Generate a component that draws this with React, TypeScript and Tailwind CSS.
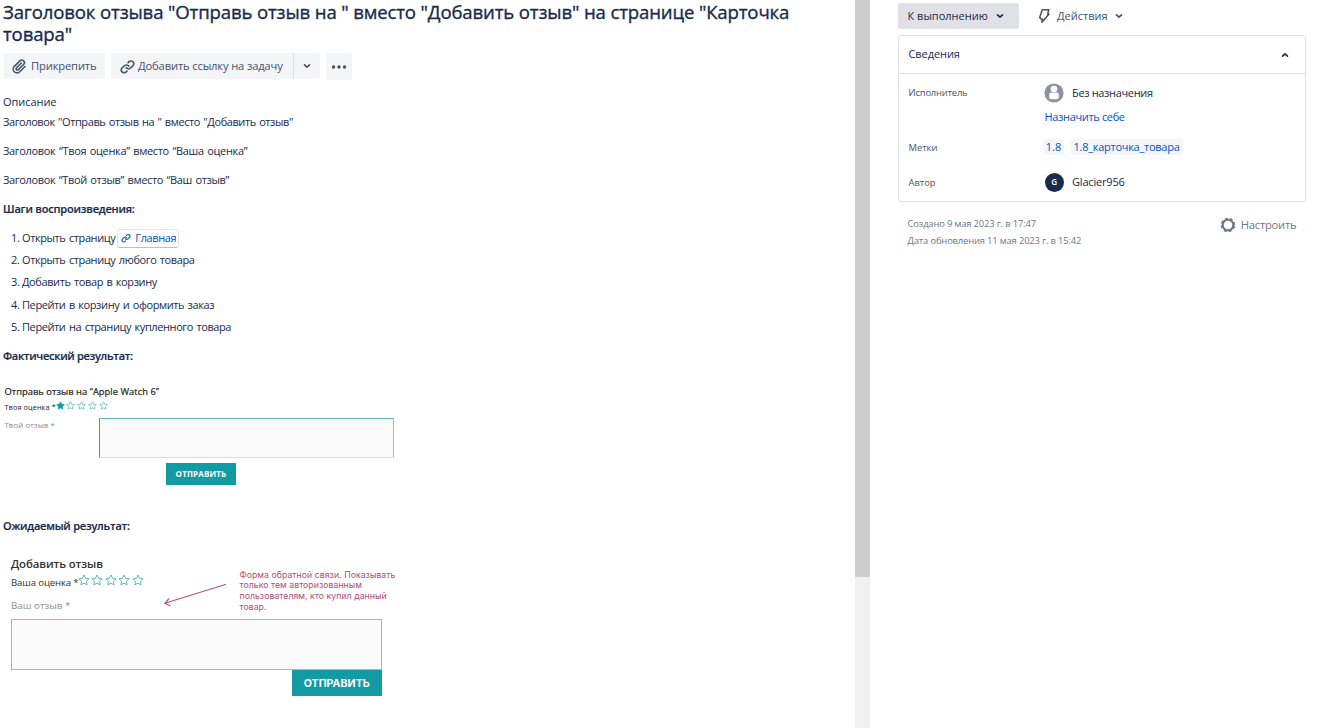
import type { ReactNode } from 'react';

const STAR = 'M12 2l3.1 6.6 7.1.9-5.2 5 1.3 7.2-6.3-3.5-6.3 3.5L7 14.500 1.800 9.500l7.100-.9z';

function Star({ filled = false, className }: { filled?: boolean; className: string }) {
  return (
    <svg viewBox="0 0 24 24" className={className} fill={filled ? '#129ba3' : 'none'} stroke={filled ? '#129ba3' : '#5fb5bb'} strokeWidth="2" strokeLinejoin="miter">
      <path d={STAR} />
    </svg>
  );
}

function LinkIcon({ className }: { className: string }) {
  return (
    <svg viewBox="0 0 24 24" className={className} fill="currentColor">
      <path d="M12.856 5.457l-.937.92a1.002 1.002 0 0 0 0 1.437 1.047 1.047 0 0 0 1.463 0l.984-.966c.967-.95 2.542-1.135 3.602-.288a2.54 2.54 0 0 1 .203 3.81l-2.903 2.852a2.646 2.646 0 0 1-3.696 0l-1.11-1.09L9 13.57l1.108 1.089c1.822 1.788 4.802 1.788 6.622 0l2.905-2.852a4.558 4.558 0 0 0-.357-6.82c-1.893-1.517-4.695-1.226-6.422.47" />
      <path d="M11.144 19.543l.937-.92a1.002 1.002 0 0 0 0-1.437 1.047 1.047 0 0 0-1.462 0l-.985.966c-.967.95-2.542 1.135-3.602.288a2.54 2.54 0 0 1-.203-3.81l2.903-2.852a2.646 2.646 0 0 1 3.696 0l1.11 1.09L15 11.43l-1.108-1.089c-1.822-1.788-4.802-1.788-6.622 0l-2.905 2.852a4.558 4.558 0 0 0 .357 6.82c1.893 1.517 4.695 1.226 6.422-.47" />
    </svg>
  );
}

function ClipIcon({ className }: { className: string }) {
  return (
    <svg viewBox="0 0 24 24" className={className} fill="currentColor">
      <path d="M11.643 17.965c-1.53 1.495-4.016 1.496-5.542.004a3.773 3.773 0 0 1 .002-5.412l7.147-6.985a2.316 2.316 0 0 1 3.233-.003c.893.873.895 2.282.004 3.153l-6.703 6.55a.653.653 0 0 1-.914-.008.62.62 0 0 1 0-.902l6.229-6.087a.941.941 0 0 0 0-1.353.995.995 0 0 0-1.384 0l-6.23 6.087a2.502 2.502 0 0 0 0 3.607 2.643 2.643 0 0 0 3.683.009l6.703-6.55a4.074 4.074 0 0 0-.003-5.859 4.306 4.306 0 0 0-6.002.003l-7.148 6.985a5.655 5.655 0 0 0-.001 8.118c2.29 2.24 6.015 2.238 8.31-.005l6.686-6.533a.941.941 0 0 0 0-1.353.995.995 0 0 0-1.384 0l-6.686 6.534z" />
    </svg>
  );
}

function Chevron({ up = false, className = '' }: { up?: boolean; className?: string }) {
  return (
    <svg viewBox="0 0 8 6" className={'h-[6px] w-[8px] shrink-0 ' + className} fill="none" stroke="currentColor" strokeWidth="1.6" strokeLinecap="round" strokeLinejoin="round">
      <path d={up ? 'M1.500 4.200L4 1.800l2.500 2.400' : 'M1.500 1.800L4 4.200l2.500-2.400'} />
    </svg>
  );
}

function Row({ className = '', children }: { className?: string; children: ReactNode }) {
  return <div className={'flex items-center ' + className}>{children}</div>;
}

function Main() {
  return (
    <main className="flex w-[855px] shrink-0 flex-col pl-[3px]">
      <h1 className="h-[52px] pt-[1px] text-[18.6px] leading-[22.4px] tracking-[-0.150px] whitespace-nowrap [-webkit-text-stroke:0.35px]">
        Заголовок отзыва "Отправь отзыв на " вместо "Добавить отзыв" на странице "Карточка
        <br />
        товара"
      </h1>
      <div className="mt-[1px] ml-[1px] flex h-[27px] text-[11.2px] tracking-[-0.15px] text-[#42526e]">
        <button className="mr-[6px] flex h-[26px] w-[101px] items-center rounded-[2px] bg-[#f4f5f7] pl-[6px]">
          <ClipIcon className="mr-[2px] size-[19px]" />
          <span>Прикрепить</span>
        </button>
        <button className="flex h-[26px] w-[182px] items-center rounded-l-[2px] bg-[#f4f5f7] pl-[7px]">
          <LinkIcon className="mr-[1px] size-[19px] shrink-0" />
          <span className="whitespace-nowrap">Добавить ссылку на задачу</span>
        </button>
        <button className="mr-[6px] flex h-[26px] w-[27px] items-center justify-center rounded-r-[2px] border-l border-[#dcdfe4] bg-[#f4f5f7]">
          <Chevron />
        </button>
        <button className="flex h-[27px] w-[26px] items-center justify-center rounded-[2px] bg-[#f4f5f7]">
          <svg viewBox="0 0 16 4" className="-ml-[1px] h-[4px] w-[16px]" fill="currentColor">
            <circle cx="2.500" cy="2" r="1.700" />
            <circle cx="8" cy="2" r="1.700" />
            <circle cx="13.500" cy="2" r="1.700" />
          </svg>
        </button>
      </div>
      <div className="mt-[12px] flex flex-col text-[11px] leading-[20px] whitespace-nowrap">
        <Row className="h-[20px] tracking-[-0.05px]">Описание</Row>
        <Row className="h-[20px] tracking-[-0.41px] [word-spacing:0.9px]">Заголовок "Отправь отзыв на " вместо "Добавить отзыв"</Row>
        <Row className="mt-[9px] h-[20px] tracking-[-0.33px] [word-spacing:1px]">Заголовок “Твоя оценка” вместо “Ваша оценка”</Row>
        <Row className="mt-[9px] h-[20px] tracking-[-0.35px] [word-spacing:1px]">Заголовок “Твой отзыв” вместо “Ваш отзыв”</Row>
        <Row className="mt-[9px] h-[20px] font-semibold tracking-[-0.2px] [-webkit-text-stroke:0.2px]">Шаги воспроизведения:</Row>
      </div>
      <ol className="mt-[8px] flex flex-col pl-[8px] text-[11px] leading-[22px] tracking-[-0.4px] whitespace-nowrap [word-spacing:1px]">
        <li className="flex h-[22px] items-center">
          <span className="w-[11px]">1.</span>
          <span>Открыть страницу</span>
          <a className="ml-[2px] flex h-[19px] w-[62px] items-center rounded-[3px] border border-[#e1e4ea] border-b-[#b9bfca] pl-[2px] text-[#0052cc]">
            <LinkIcon className="mr-[3px] size-[12px]" />
            <span>Главная</span>
          </a>
        </li>
        <li className="flex h-[22px] items-center">
          <span className="w-[11px]">2.</span>
          <span>Открыть страницу любого товара</span>
        </li>
        <li className="flex h-[22px] items-center">
          <span className="w-[11px]">3.</span>
          <span>Добавить товар в корзину</span>
        </li>
        <li className="flex h-[23px] items-center">
          <span className="w-[11px]">4.</span>
          <span>Перейти в корзину и оформить заказ</span>
        </li>
        <li className="flex h-[22px] items-center">
          <span className="w-[11px]">5.</span>
          <span>Перейти на страницу купленного товара</span>
        </li>
      </ol>
      <Row className="mt-[8px] h-[20px] text-[11px] font-semibold tracking-[-0.3px] [-webkit-text-stroke:0.2px]">Фактический результат:</Row>

      <section className="flex h-[150px] flex-col pt-[20px] pl-[1.500px] text-[#222]">
        <Row className="h-[12px] text-[9.300px] tracking-[0.050px] [-webkit-text-stroke:0.2px]">Отправь отзыв на “Apple Watch 6”</Row>
        <div className="flex h-[16px]">
          <Row className="h-[18px] w-[51px] text-[7.300px] tracking-[0.100px] whitespace-nowrap">Твоя оценка *</Row>
          <div className="flex h-[14px] items-center gap-[1.900px]">
            <Star filled className="size-[9px]" />
            <Star className="size-[9px]" />
            <Star className="size-[9px]" />
            <Star className="size-[9px]" />
            <Star className="size-[9px]" />
          </div>
        </div>
        <div className="mt-[4px] flex">
          <Row className="h-[15px] w-[94.500px] text-[7.800px] tracking-[0.080px] text-[#8c8c8c]">Твой отзыв *</Row>
          <div className="h-[40px] w-[295px] border border-t-[#5fbcc2] border-r-[#86cbd0] border-b-[#cbe5e6] border-l-[#2ba3aa] bg-[#fafafa]" />
        </div>
        <button className="mt-[5px] ml-[161.500px] flex h-[22px] w-[70px] items-center justify-center bg-[#129ba3] text-[8px] font-bold tracking-[0.180px] text-white">ОТПРАВИТЬ</button>
      </section>

      <Row className="h-[20px] text-[11px] font-semibold tracking-[-0.220px] [-webkit-text-stroke:0.2px]">Ожидаемый результат:</Row>

      <section className="flex flex-col pt-[20px] pl-[8px] text-[#333]">
        <div className="flex h-[63px]">
          <div className="w-[153px]">
            <Row className="h-[16px] text-[11.400px] font-semibold tracking-[-0.130px]">Добавить отзыв</Row>
            <div className="flex h-[22px]">
              <Row className="h-[23px] w-[66.500px] text-[9.600px] tracking-[-0.130px] whitespace-nowrap">Ваша оценка *</Row>
              <div className="flex h-[16px] items-center gap-[1.500px]">
                <Star className="size-[12px]" />
                <Star className="size-[12px]" />
                <Star className="size-[12px]" />
                <Star className="size-[12px]" />
                <Star className="size-[12px]" />
              </div>
            </div>
            <Row className="mt-[1px] h-[23px] text-[9.800px] text-[#8f8f8f]">Ваш отзыв *</Row>
          </div>
          <svg className="mt-[26px] h-[26px] w-[63px]" viewBox="0 0 63 26" fill="none" stroke="#b05578" strokeWidth="1.2" strokeLinecap="round" strokeLinejoin="round">
            <path d="M61.500 2.500L0.800 21.300M4.700 17L0.800 21.300l5.200 2.500" />
          </svg>
          <p className="mt-[13.500px] ml-[12.500px] font-['Inter','Liberation_Sans',sans-serif] text-[8.700px] leading-[10.700px] tracking-[0.050px] whitespace-nowrap text-[#b34d75]">
            Форма обратной связи. Показывать
            <br />
            только тем авторизованным
            <br />
            пользователям, кто купил данный
            <br />
            товар.
          </p>
        </div>
        <div className="h-[51px] w-[371px] border border-solid border-[#7cc9ce] bg-[#fafafa]" />
        <button className="ml-[280.500px] flex h-[26px] w-[90.500px] items-center justify-center bg-[#129ba3] pt-[1px] font-['Inter','Liberation_Sans',sans-serif] text-[10.600px] font-bold tracking-[0.020px] text-white">ОТПРАВИТЬ</button>
      </section>
    </main>
  );
}

function Aside() {
  return (
    <aside className="flex w-[450px] flex-col pt-[3px] pl-[28px]">
      <div className="flex h-[26px] text-[11px]">
        <button className="flex w-[121px] items-center rounded-[2px] bg-[#dfe1e6] pl-[9.500px]">
          <span className="w-[88px] text-left whitespace-nowrap">К выполнению</span>
          <Chevron />
        </button>
        <button className="ml-[18px] flex items-center text-[#42526e]">
          <svg viewBox="0 0 14 16" className="mr-[6px] h-[16px] w-[14px]" fill="none" stroke="currentColor" strokeWidth="1.500" strokeLinejoin="round">
            <path d="M5.300 1.700h6.500L10.700 5.900h1.300L4.900 14.300l.4-3.300H4L2.700 9.500z" />
          </svg>
          <span className="w-[58px] text-left">Действия</span>
          <Chevron />
        </button>
      </div>
      <section className="mt-[6px] flex h-[167px] w-[408px] flex-col rounded-[3px] border border-[#dfe1e6]">
        <header className="flex h-[38px] items-center justify-between border-b border-[#dfe1e6] pr-[16px] pl-[9.500px] text-[11px]">
          <span className="tracking-[-0.080px]">Сведения</span>
          <Chevron up />
        </header>
        <div className="grid grid-cols-[136px_1fr] pt-[9px] pl-[9.500px] text-[11px]">
          <Row className="h-[20px] text-[9.400px] tracking-[-0.180px] text-[#44546f]">Исполнитель</Row>
          <Row className="h-[20px] tracking-[-0.340px]">
            <svg viewBox="0 0 20 20" className="mr-[8px] -ml-[0.500px] size-[20px]">
              <circle cx="10" cy="10" r="9.600" fill="#8993a4" />
              <circle cx="10" cy="6" r="3.300" fill="#fff" />
              <rect x="5.200" y="9.500" width="9.600" height="6.800" rx="2.200" fill="#fff" />
            </svg>
            Без назначения
          </Row>
          <a className="col-start-2 mt-[4px] flex h-[20px] items-center tracking-[-0.340px] text-[#0052cc]">Назначить себе</a>
          <Row className="mt-[11px] h-[20px] text-[9.400px] text-[#44546f]">Метки</Row>
          <Row className="mt-[10px] h-[20px] text-[#0052cc]">
            <a className="-ml-[1px] flex h-[16px] w-[20px] items-center justify-center rounded-[2px] bg-[#f4f5f7]">1.8</a>
            <a className="ml-[7px] flex h-[16px] w-[112px] items-center justify-center rounded-[2px] bg-[#f4f5f7] tracking-[-0.260px]">1.8_карточка_товара</a>
          </Row>
          <Row className="mt-[15px] h-[20px] text-[9.400px] text-[#44546f]">Автор</Row>
          <Row className="mt-[14px] h-[20px] tracking-[-0.180px]">
            <span className="mr-[8.500px] flex size-[19px] items-center justify-center rounded-full bg-[#172b4d] text-[8px] font-semibold text-white">G</span>
            Glacier956
          </Row>
        </div>
      </section>
      <footer className="flex w-[408px] justify-between pt-[13px] pr-[9.500px] pl-[9.500px] text-[#6b778c]">
        <div className="text-[9.400px] leading-[17px] tracking-[-0.150px]">
          <p>Создано 9 мая 2023 г. в 17:47</p>
          <p>Дата обновления 11 мая 2023 г. в 15:42</p>
        </div>
        <Row className="mt-[1px] h-[18px] text-[11.200px] tracking-[-0.200px]">
          <svg viewBox="0 0 16 16" className="mr-[5px] size-[16px]" fill="none" stroke="currentColor">
            <circle cx="8" cy="8" r="5.300" strokeWidth="2" />
            <circle cx="8" cy="8" r="6.500" strokeWidth="1.500" strokeDasharray="3 2.105" strokeDashoffset="4.050" />
          </svg>
          Настроить
        </Row>
      </footer>
    </aside>
  );
}

export default function App() {
  return (
    <div className="flex h-[728px] w-[1320px] overflow-hidden bg-white font-['Open_Sans','Noto_Sans',sans-serif] text-[#172b4d]">
      <Main />
      <div className="h-full w-[15px] shrink-0 bg-[#f0f0f0]">
        <div className="h-[577px] bg-[#cdcdcd]" />
      </div>
      <Aside />
    </div>
  );
}
